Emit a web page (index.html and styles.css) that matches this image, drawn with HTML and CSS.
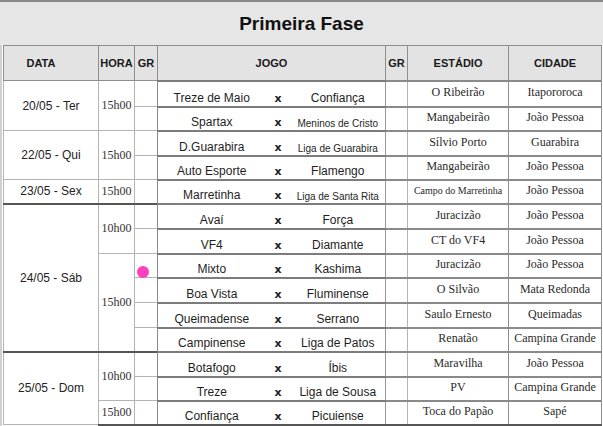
FILE: index.html
```html
<!DOCTYPE html>
<html lang="pt">
<head>
<meta charset="utf-8">
<link rel="stylesheet" href="styles.css">
</head>
<body>
<div class="page">
  <div class="title">Primeira Fase</div>
  <div class="sheet">
    <table class="grid">
      <colgroup>
        <col class="c-data"><col class="c-hora"><col class="c-gr"><col class="c-home"><col class="c-x"><col class="c-away"><col class="c-gr2"><col class="c-est"><col class="c-cid">
      </colgroup>
      <thead>
        <tr class="head">
          <th class="h-data">DATA</th><th>HORA</th><th>GR</th><th colspan="3">JOGO</th><th>GR</th><th>ESTÁDIO</th><th>CIDADE</th>
        </tr>
      </thead>
      <tbody>
        <tr class="r26">
          <td class="date" rowspan="2">20/05 - Ter</td><td class="hora" rowspan="2">15h00</td><td class="gr"></td>
          <td class="home">Treze de Maio</td><td class="vs">x</td><td class="away">Confiança</td><td class="gr2"></td>
          <td class="est">O Ribeirão</td><td class="cid">Itapororoca</td>
        </tr>
        <tr class="r24">
          <td class="gr"></td>
          <td class="home">Spartax</td><td class="vs">x</td><td class="away small">Meninos de Cristo</td><td class="gr2"></td>
          <td class="est">Mangabeirão</td><td class="cid">João Pessoa</td>
        </tr>
        <tr class="r25">
          <td class="date" rowspan="2">22/05 - Qui</td><td class="hora" rowspan="2">15h00</td><td class="gr"></td>
          <td class="home">D.Guarabira</td><td class="vs">x</td><td class="away small">Liga de Guarabira</td><td class="gr2"></td>
          <td class="est">Sílvio Porto</td><td class="cid">Guarabira</td>
        </tr>
        <tr class="r24">
          <td class="gr"></td>
          <td class="home">Auto Esporte</td><td class="vs">x</td><td class="away">Flamengo</td><td class="gr2"></td>
          <td class="est">Mangabeirão</td><td class="cid">João Pessoa</td>
        </tr>
        <tr class="r24">
          <td class="date">23/05 - Sex</td><td class="hora">15h00</td><td class="gr"></td>
          <td class="home">Marretinha</td><td class="vs">x</td><td class="away small">Liga de Santa Rita</td><td class="gr2"></td>
          <td class="est small">Campo do Marretinha</td><td class="cid">João Pessoa</td>
        </tr>
        <tr class="r25 sep">
          <td class="date" rowspan="6">24/05 - Sáb</td><td class="hora" rowspan="2">10h00</td><td class="gr"></td>
          <td class="home">Avaí</td><td class="vs">x</td><td class="away">Força</td><td class="gr2"></td>
          <td class="est">Juracizão</td><td class="cid">João Pessoa</td>
        </tr>
        <tr class="r25">
          <td class="gr"></td>
          <td class="home">VF4</td><td class="vs">x</td><td class="away">Diamante</td><td class="gr2"></td>
          <td class="est">CT do VF4</td><td class="cid">João Pessoa</td>
        </tr>
        <tr class="r24">
          <td class="hora" rowspan="4">15h00</td><td class="gr"></td>
          <td class="home">Mixto</td><td class="vs">x</td><td class="away">Kashima</td><td class="gr2"></td>
          <td class="est">Juracizão</td><td class="cid">João Pessoa</td>
        </tr>
        <tr class="r25">
          <td class="gr"></td>
          <td class="home">Boa Vista</td><td class="vs">x</td><td class="away">Fluminense</td><td class="gr2"></td>
          <td class="est">O Silvão</td><td class="cid">Mata Redonda</td>
        </tr>
        <tr class="r25">
          <td class="gr"></td>
          <td class="home">Queimadense</td><td class="vs">x</td><td class="away">Serrano</td><td class="gr2"></td>
          <td class="est">Saulo Ernesto</td><td class="cid">Queimadas</td>
        </tr>
        <tr class="r24">
          <td class="gr"></td>
          <td class="home">Campinense</td><td class="vs">x</td><td class="away">Liga de Patos</td><td class="gr2"></td>
          <td class="est">Renatão</td><td class="cid">Campina Grande</td>
        </tr>
        <tr class="r25 sep">
          <td class="date" rowspan="3">25/05 - Dom</td><td class="hora" rowspan="2">10h00</td><td class="gr"></td>
          <td class="home">Botafogo</td><td class="vs">x</td><td class="away">Íbis</td><td class="gr2"></td>
          <td class="est">Maravilha</td><td class="cid">João Pessoa</td>
        </tr>
        <tr class="r24">
          <td class="gr"></td>
          <td class="home">Treze</td><td class="vs">x</td><td class="away">Liga de Sousa</td><td class="gr2"></td>
          <td class="est">PV</td><td class="cid">Campina Grande</td>
        </tr>
        <tr class="r24 last">
          <td class="hora">15h00</td><td class="gr"></td>
          <td class="home">Confiança</td><td class="vs">x</td><td class="away">Picuiense</td><td class="gr2"></td>
          <td class="est">Toca do Papão</td><td class="cid">Sapé</td>
        </tr>
      </tbody>
    </table>
    <span class="dot"></span>
  </div>
</div>
</body>
</html>
```

FILE: styles.css
```css
html, body {
  margin: 0;
  padding: 0;
  background: #ffffff;
}

.page {
  width: 603px;
  height: 426px;
  overflow: hidden;
  font-family: "Liberation Sans", Arial, sans-serif;
  color: #1e1e1e;
}

.title {
  height: 43px;
  border-top: 2px solid #8a8a8a;
  background: #e6e6e6;
  text-align: center;
  font-weight: bold;
  font-size: 19px;
  line-height: 43px;
  color: #111;
}

.sheet {
  position: relative;
  padding-left: 3px;
  background: linear-gradient(to right, #d0d0d0 0, #d0d0d0 2px, transparent 2px);
}

.grid {
  border-collapse: collapse;
  table-layout: fixed;
  width: 598px;
}

.c-data { width: 95px; }
.c-hora { width: 36px; }
.c-gr { width: 23px; }
.c-home { width: 108px; }
.c-x { width: 25px; }
.c-away { width: 95px; }
.c-gr2 { width: 22px; }
.c-est { width: 101px; }
.c-cid { width: 93px; }

.head {
  height: 35px;
  background: #e3e3e3;
}

.head th {
  border: 1px solid #8e8e8e;
  font-size: 11px;
  font-weight: bold;
  color: #1a1a1a;
  padding: 0;
  text-align: center;
  vertical-align: middle;
  white-space: nowrap;
}

.head th.h-data {
  padding-right: 20px;
}

.grid td {
  padding: 0;
  text-align: center;
  vertical-align: middle;
  white-space: nowrap;
  overflow: hidden;
  border: 1px solid #b4b4b4;
}

.r24 { height: 24px; }
.r25 { height: 25px; }
.r26 { height: 26px; }

.date {
  font-size: 12px;
  color: #222;
}

.hora {
  font-family: "Liberation Serif", "Times New Roman", serif;
  font-size: 12px;
  color: #333;
}

.grid td.gr {
  border-right: 1px solid #8c8c8c;
}

.grid td.home,
.grid td.vs,
.grid td.away {
  vertical-align: bottom;
  padding-bottom: 1px;
  font-size: 12px;
  border-top: 2px solid #7c7c7c;
  border-bottom: 2px solid #7c7c7c;
}

.grid td.home {
  border-right: none;
}

.grid td.vs {
  border-left: none;
  border-right: none;
  font-weight: bold;
  font-size: 11px;
  font-family: "DejaVu Sans", "Liberation Sans", sans-serif;
}

.grid td.away {
  border-left: none;
  border-right: 1px solid #999;
}

.grid td.small {
  font-size: 10px;
}

.grid td.gr2 {
  border-bottom: 2px solid #8a8a8a;
  border-top: 2px solid #8a8a8a;
}

.grid td.est,
.grid td.cid {
  font-family: "Liberation Serif", "Times New Roman", serif;
  font-size: 12px;
  color: #2a2a2a;
  padding-bottom: 2px;
  border: 1px solid #8e8e8e;
  border-top: 2px solid #8a8a8a;
  border-bottom: 2px solid #8a8a8a;
}

.grid td.est.small {
  font-size: 10px;
}

.grid tr.sep td {
  border-top: 2px solid #555555;
}

.grid tr.last td {
  border-bottom: 2px solid #555555;
}

.dot {
  position: absolute;
  left: 137px;
  top: 221px;
  width: 12px;
  height: 12px;
  border-radius: 50%;
  background: #ff3fbf;
}
```
